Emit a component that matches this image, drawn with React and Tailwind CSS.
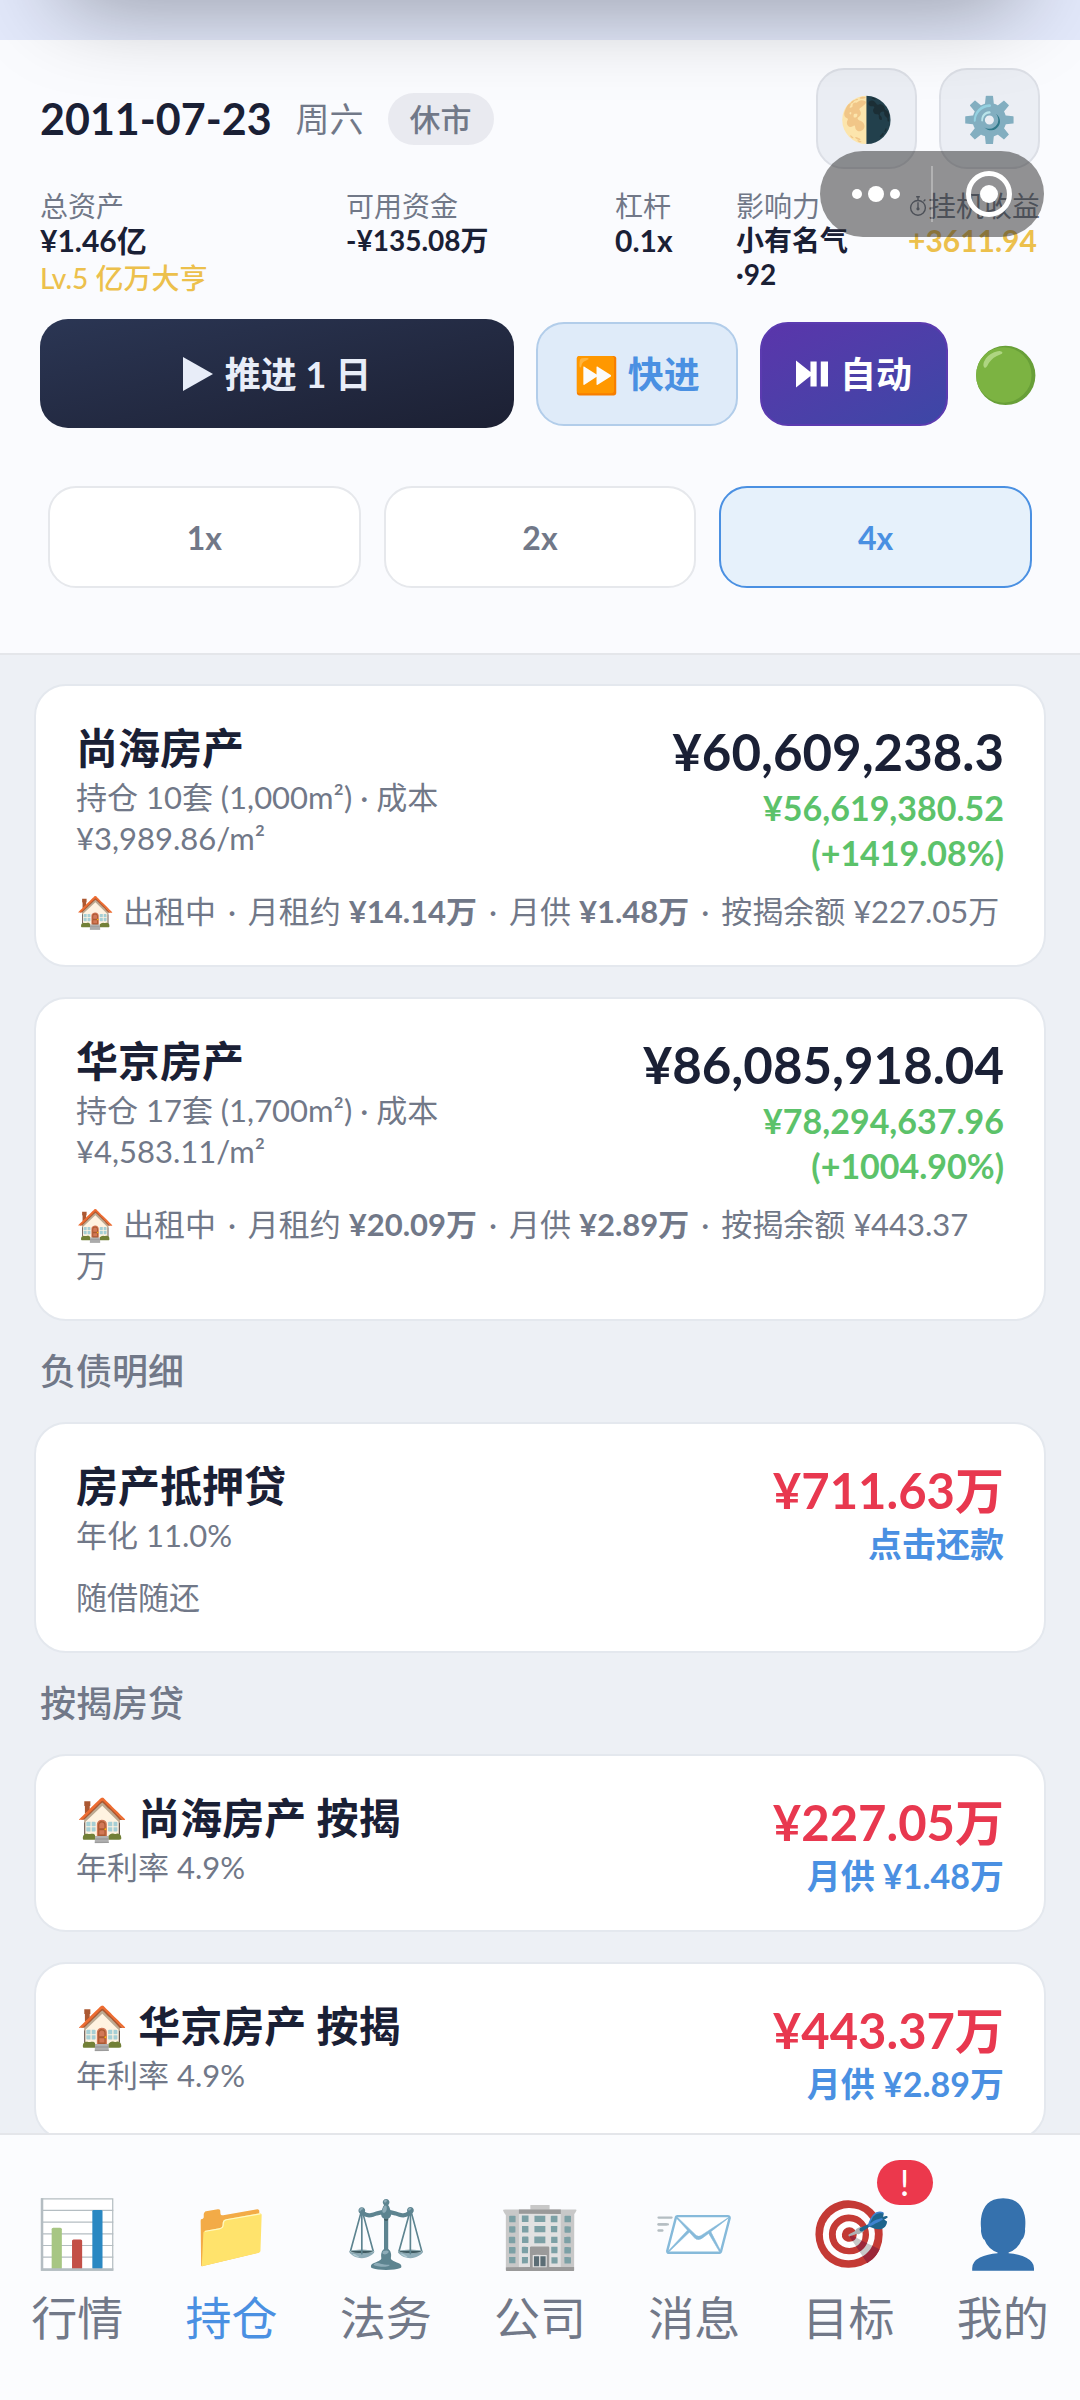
import { useState } from 'react';
import clsx from 'clsx';

const properties = [
  {
    name: '尚海房产',
    holding: '持仓 10套 (1,000m²) · 成本',
    cost: '¥3,989.86/m²',
    value: '¥60,609,238.3',
    profit: '¥56,619,380.52',
    percent: '(+1419.08%)',
    rent: '¥14.14万',
    monthly: '¥1.48万',
    balance: '¥227.05',
  },
  {
    name: '华京房产',
    holding: '持仓 17套 (1,700m²) · 成本',
    cost: '¥4,583.11/m²',
    value: '¥86,085,918.04',
    profit: '¥78,294,637.96',
    percent: '(+1004.90%)',
    rent: '¥20.09万',
    monthly: '¥2.89万',
    balance: '¥443.37',
    breakUnit: true,
  },
];

const mortgages = [
  { name: '🏠 尚海房产 按揭', rate: '年利率 4.9%', amount: '¥227.05万', monthly: '月供 ¥1.48万' },
  { name: '🏠 华京房产 按揭', rate: '年利率 4.9%', amount: '¥443.37万', monthly: '月供 ¥2.89万' },
];

const tabs = [
  { icon: '📊', label: '行情' },
  { icon: '📁', label: '持仓' },
  { icon: '⚖️', label: '法务' },
  { icon: '🏢', label: '公司' },
  { icon: '📨', label: '消息' },
  { icon: '🎯', label: '目标', badge: '!' },
  { icon: '👤', label: '我的' },
];

const speeds = ['1x', '2x', '4x'];

const StopwatchIcon = () => (
  <svg viewBox="0 0 20 26" className="w-5 h-6 flex-shrink-0" fill="none" stroke="currentColor" strokeWidth="1.5">
    <circle cx="10" cy="15" r="8" />
    <path d="M8 3h4M10 3v4M10 9v7M16 8l2-2" />
    <circle cx="10" cy="16" r="1" />
  </svg>
);

const PlayPauseIcon = () => (
  <svg viewBox="0 0 31 26" className="w-8 h-7" fill="currentColor">
    <path d="M0 0l14 11V1h6v24h-6V15L0 26zM24 1h7v24h-7z" />
  </svg>
);

const Dot = () => <span className="mx-1">·</span>;

const Stat = ({ label, children }) => (
  <div className="text-[28px] leading-[34px] whitespace-nowrap">
    <dt className="flex items-center text-[#717888]">{label}</dt>
    {children}
  </div>
);

const Card = ({ children }) => (
  <article className="bg-white border-2 border-[#e4e8ee] rounded-[32px] px-10 py-[33px]">
    {children}
  </article>
);

const SectionTitle = ({ children }) => (
  <h2 className="px-[6px] text-4xl leading-[41px] font-medium text-[#717888]">{children}</h2>
);

const PropertyCard = ({ item }) => (
  <Card>
    <div className="flex justify-between">
      <div>
        <h3 className="text-[42px] leading-[58px] font-bold text-[#1a2035]">{item.name}</h3>
        <p>{item.holding}</p>
        <p>{item.cost}</p>
      </div>
      <div className="text-right font-bold text-[34px] leading-[45px] text-[#5cc26a]">
        <p className="text-[51px] leading-[66px] text-[#1a2035]">{item.value}</p>
        <p>{item.profit}</p>
        <p>{item.percent}</p>
      </div>
    </div>
    <p className="mt-4">
      🏠 出租中 <Dot /> 月租约 <b>{item.rent}</b> <Dot /> 月供 <b>{item.monthly}</b> <Dot /> 按揭余额 {item.balance}
      {item.breakUnit && <br />}万
    </p>
  </Card>
);

const LoanHead = ({ name, rate, amount, children }) => (
  <div className="flex justify-between">
    <div>
      <h3 className="text-[42px] leading-[58px] font-bold text-[#1a2035]">{name}</h3>
      <p>{rate}</p>
    </div>
    <div className="flex flex-col items-end text-[34px] leading-[42px] font-bold text-[#4a90e2]">
      <p className="text-[49px] leading-[66px] text-[#e8384f]">{amount}</p>
      {children}
    </div>
  </div>
);

export default function App() {
  const [speed, setSpeed] = useState('4x');
  const [tab, setTab] = useState('持仓');

  return (
    <div className="relative h-screen flex flex-col overflow-hidden bg-[#edf0f5] text-[31px] leading-[41px] text-[#717888] font-['Lato','Noto_Sans_CJK_SC',sans-serif]">
      {/* Shadow cast by the panel above the page */}
      <div className="absolute z-10 -top-20 inset-x-16 h-20 shadow-[0_0_90px_rgba(0,0,0,0.4)]"></div>

      <div className="h-10 flex-shrink-0 bg-[#e2e8fa]"></div>

      <header className="relative flex-shrink-0 bg-[#fafbfe] border-b-2 border-[#e4e6ea] px-10 pt-7 pb-[65px]">
        <div className="flex items-center justify-between">
          <div className="flex items-center gap-6">
            <h1 className="text-[43px] leading-[52px] font-bold text-[#1a2035]">2011-07-23</h1>
            <span className="text-[34px]">周六</span>
            <span className="rounded-full bg-[#e9eaf0] px-[22px] py-[5px] leading-[42px] font-medium">休市</span>
          </div>
          <div className="flex gap-[22px]">
            <button aria-label="主题" className="w-[101px] h-[101px] rounded-[28px] border-2 border-[#dcdfe6] bg-[#ebeef4] text-[44px]">🌗</button>
            <button aria-label="设置" className="w-[101px] h-[101px] rounded-[28px] border-2 border-[#dcdfe6] bg-[#ebeef4] text-[44px]">⚙️</button>
          </div>
        </div>

        <dl className="mt-5 grid grid-cols-[306fr_269fr_121fr_172fr_132fr]">
          <Stat label="总资产">
            <dd className="text-3xl leading-[34px] font-bold text-[#1a2035]">¥1.46亿</dd>
            <dd className="mt-1 font-medium text-[#ecc04c]">Lv.5 亿万大亨</dd>
          </Stat>
          <Stat label="可用资金">
            <dd className="font-bold text-[#1a2035]">-¥135.08万</dd>
          </Stat>
          <Stat label="杠杆">
            <dd className="text-3xl leading-[34px] font-bold text-[#1a2035]">0.1x</dd>
          </Stat>
          <Stat label="影响力">
            <dd className="font-bold text-[#1a2035]">
              小有名气<br />·92
            </dd>
          </Stat>
          <Stat label={<><StopwatchIcon />挂机收益</>}>
            <dd className="text-3xl leading-[34px] font-bold text-[#ecc04c]">+3611.94</dd>
          </Stat>
        </dl>

        {/* Floating mini program capsule */}
        <div className="absolute right-9 top-[111px] w-56 h-[86px] rounded-full bg-[#282828]/50 flex items-center">
          <button aria-label="更多" className="flex-1 flex items-center justify-center gap-[6px]">
            <span className="w-[10px] h-[10px] rounded-full bg-white"></span>
            <span className="w-4 h-4 rounded-full bg-white"></span>
            <span className="w-[10px] h-[10px] rounded-full bg-white"></span>
          </button>
          <span className="w-[2px] h-14 bg-white/30"></span>
          <button aria-label="关闭" className="flex-1 flex items-center justify-center">
            <span className="w-[46px] h-[46px] rounded-full border-[5px] border-white flex items-center justify-center">
              <span className="w-[18px] h-[18px] rounded-full bg-white"></span>
            </span>
          </button>
        </div>

        <div className="mt-6 flex items-center gap-[22px] text-4xl font-bold">
          <button className="flex-1 h-[109px] rounded-[28px] bg-linear-to-br from-[#2b3654] to-[#1c2033] text-[#e8edf8] flex items-center justify-center gap-3">
            <svg viewBox="0 0 30 34" className="w-[30px] h-[34px]" fill="currentColor">
              <path d="M0 0l30 17L0 34z" />
            </svg>
            推进 1 日
          </button>
          <button className="w-[202px] h-[104px] rounded-[28px] border-2 border-[#b2cdea] bg-[#dfebf9] text-[#4a90e2]">⏩ 快进</button>
          <button className="w-[188px] h-[104px] rounded-[28px] border-2 border-[#5b3bb0] bg-linear-to-br from-[#5a35ab] to-[#3c47a6] text-white flex items-center justify-center gap-3">
            <PlayPauseIcon />
            自动
          </button>
          <button aria-label="状态" className="w-[70px] h-[104px] flex items-center justify-center text-[54px]">🟢</button>
        </div>

        <div className="mt-[58px] px-2 grid grid-cols-3 gap-[23px]">
          {speeds.map((s) => (
            <button
              key={s}
              onClick={() => setSpeed(s)}
              className={clsx(
                'h-[102px] rounded-[28px] border-2 text-[32px] font-bold',
                s === speed ? 'border-[#4a90e2] bg-[#e6f1fb] text-[#4a90e2]' : 'border-[#e6e8ec] bg-white'
              )}
            >
              {s}
            </button>
          ))}
        </div>
      </header>

      <main className="flex-1 min-h-0 overflow-y-auto [scrollbar-width:none] px-[34px] pt-[29px] pb-8 flex flex-col gap-[30px] *:flex-shrink-0">
        {properties.map((item) => (
          <PropertyCard key={item.name} item={item} />
        ))}

        <SectionTitle>负债明细</SectionTitle>
        <Card>
          <LoanHead name="房产抵押贷" rate="年化 11.0%" amount="¥711.63万">
            <button>点击还款</button>
          </LoanHead>
          <p className="mt-3">随借随还</p>
        </Card>

        <SectionTitle>按揭房贷</SectionTitle>
        {mortgages.map((item) => (
          <Card key={item.name}>
            <LoanHead name={item.name} rate={item.rate} amount={item.amount}>
              <p>{item.monthly}</p>
            </LoanHead>
          </Card>
        ))}
      </main>

      <nav className="flex-shrink-0 grid grid-cols-7 border-t-2 border-[#e4e6ea] bg-[#fbfcfe] pt-[53px] pb-[52px]">
        {tabs.map((t) => (
          <button
            key={t.label}
            onClick={() => setTab(t.label)}
            className={clsx('flex flex-col items-center gap-3', t.label === tab && 'text-[#4a90e2]')}
          >
            <span className="relative w-20 flex justify-center text-[66px] leading-[88px]">
              <span className={t.label === tab ? 'saturate-100' : 'saturate-[0.65]'}>{t.icon}</span>
              {t.badge && (
                <span className="absolute -right-11 -top-7 w-14 h-[45px] rounded-full bg-[#ec384c] text-white text-4xl leading-[45px]">
                  {t.badge}
                </span>
              )}
            </span>
            <span className="text-[46px] leading-[60px]">{t.label}</span>
          </button>
        ))}
      </nav>
    </div>
  );
}
